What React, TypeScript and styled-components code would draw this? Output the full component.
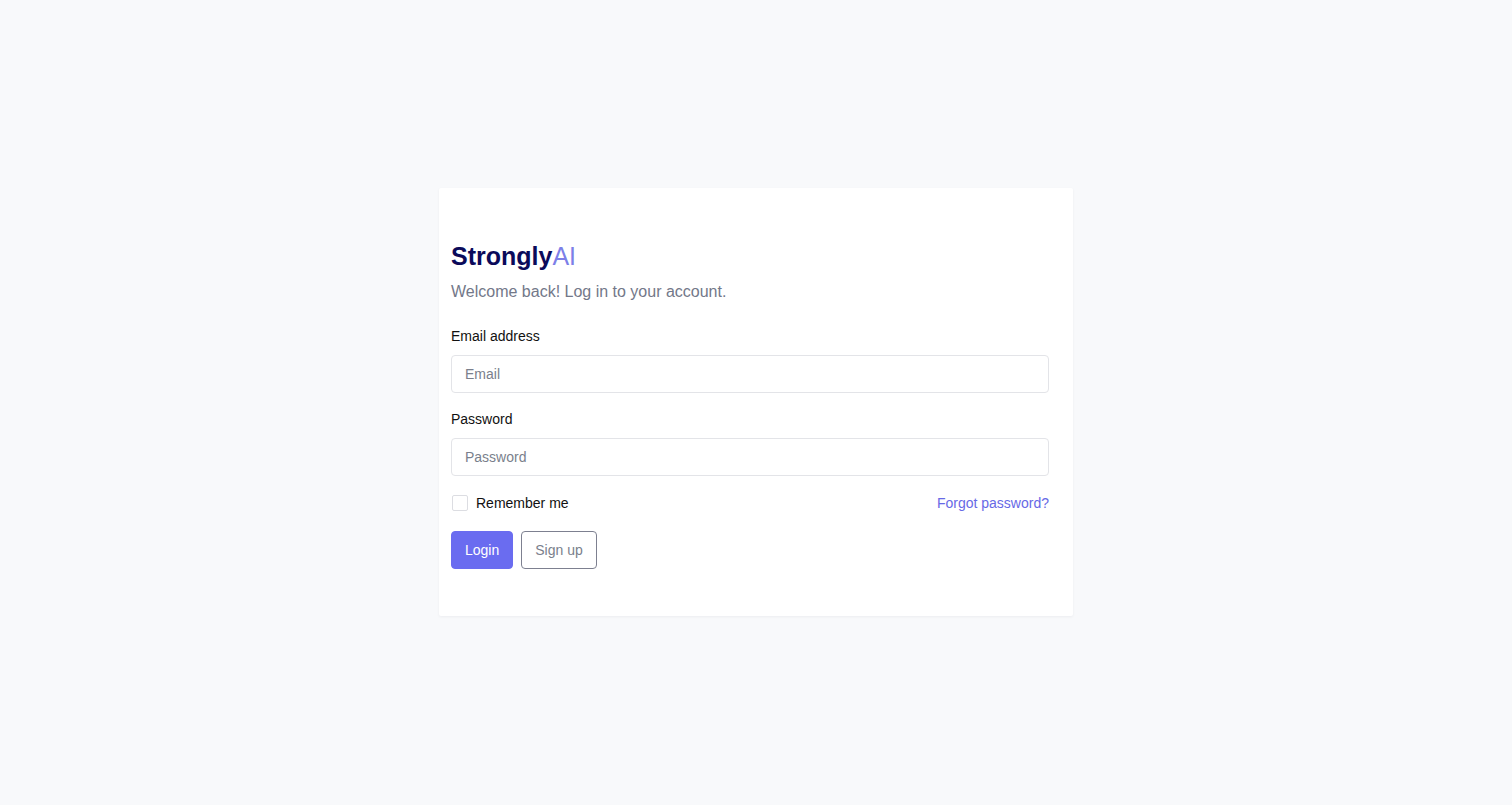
import { useState } from 'react';
import styled, { createGlobalStyle } from 'styled-components';

const GlobalStyle = createGlobalStyle`
  html, body {
    margin: 0;
    padding: 0;
    background: #f8f9fb;
  }
  body {
    font-family: "Liberation Sans", Arial, Helvetica, sans-serif;
    color: #111;
  }
`;

const Page = styled.div`
  min-height: 805px;
  display: flex;
  justify-content: center;
  padding-top: 188px;
  box-sizing: border-box;
`;

const Card = styled.div`
  width: 634px;
  height: 428px;
  box-sizing: border-box;
  padding: 53px 24px 48px 12px;
  background: #fff;
  border-radius: 2px;
  box-shadow: 0 1px 3px rgba(15, 23, 42, 0.05);
`;

const Title = styled.h1`
  margin: 0;
  font-size: 25px;
  line-height: 30px;
  font-weight: 700;
  color: #0b0a5a;
`;

const Accent = styled.span`
  font-weight: 400;
  color: #7d7fe8;
`;

const Subtitle = styled.p`
  margin: 10px 0 0;
  font-size: 16px;
  line-height: 22px;
  color: #737889;
`;

const Form = styled.form`
  margin-top: 24px;
  display: flex;
  flex-direction: column;
`;

const Field = styled.div`
  display: flex;
  flex-direction: column;
  gap: 10px;
  margin-bottom: 17px;
`;

const Label = styled.label`
  font-size: 14px;
  line-height: 18px;
  color: #111;
`;

const Input = styled.input`
  height: 38px;
  box-sizing: border-box;
  width: 100%;
  padding: 0 13px;
  border: 1px solid #e3e4e8;
  border-radius: 4px;
  font-family: inherit;
  font-size: 14px;
  color: #111;
  background: #fff;
  outline: none;
  &::placeholder {
    color: #7a7f8c;
  }
`;

const OptionsRow = styled.div`
  display: flex;
  align-items: center;
  justify-content: space-between;
  margin-top: 1px;
  height: 18px;
`;

const CheckLabel = styled.label`
  display: flex;
  align-items: center;
  gap: 8px;
  font-size: 14px;
  color: #111;
  cursor: pointer;
`;

const Box = styled.span<{ $checked: boolean }>`
  width: 16px;
  height: 16px;
  box-sizing: border-box;
  margin-left: 1px;
  border: 1px solid #dcdde2;
  border-radius: 2px;
  background: ${p => (p.$checked ? '#6a6cf0' : '#fff')};
`;

const ForgotLink = styled.a`
  font-size: 14px;
  color: #6769e6;
  text-decoration: none;
`;

const Buttons = styled.div`
  display: flex;
  gap: 8px;
  margin-top: 19px;
`;

const Button = styled.button<{ $primary?: boolean }>`
  height: 38px;
  box-sizing: border-box;
  padding: 0 13px;
  border-radius: 4px;
  font-family: inherit;
  font-size: 14px;
  cursor: pointer;
  border: 1px solid ${p => (p.$primary ? '#6a6cf0' : '#7d8090')};
  background: ${p => (p.$primary ? '#6a6cf0' : '#fff')};
  color: ${p => (p.$primary ? '#fff' : '#7a7f8c')};
`;

const App = () => {
  const [remember, setRemember] = useState(false);

  return (
    <>
      <GlobalStyle />
      <Page>
        <Card>
          <Title>
            Strongly<Accent>AI</Accent>
          </Title>
          <Subtitle>Welcome back! Log in to your account.</Subtitle>
          <Form onSubmit={e => e.preventDefault()}>
            <Field>
              <Label htmlFor="email">Email address</Label>
              <Input id="email" type="email" placeholder="Email" />
            </Field>
            <Field>
              <Label htmlFor="password">Password</Label>
              <Input id="password" type="password" placeholder="Password" />
            </Field>
            <OptionsRow>
              <CheckLabel onClick={() => setRemember(!remember)}>
                <Box $checked={remember} />
                Remember me
              </CheckLabel>
              <ForgotLink href="#">Forgot password?</ForgotLink>
            </OptionsRow>
            <Buttons>
              <Button $primary type="submit">Login</Button>
              <Button type="button">Sign up</Button>
            </Buttons>
          </Form>
        </Card>
      </Page>
    </>
  );
};

export default App;
